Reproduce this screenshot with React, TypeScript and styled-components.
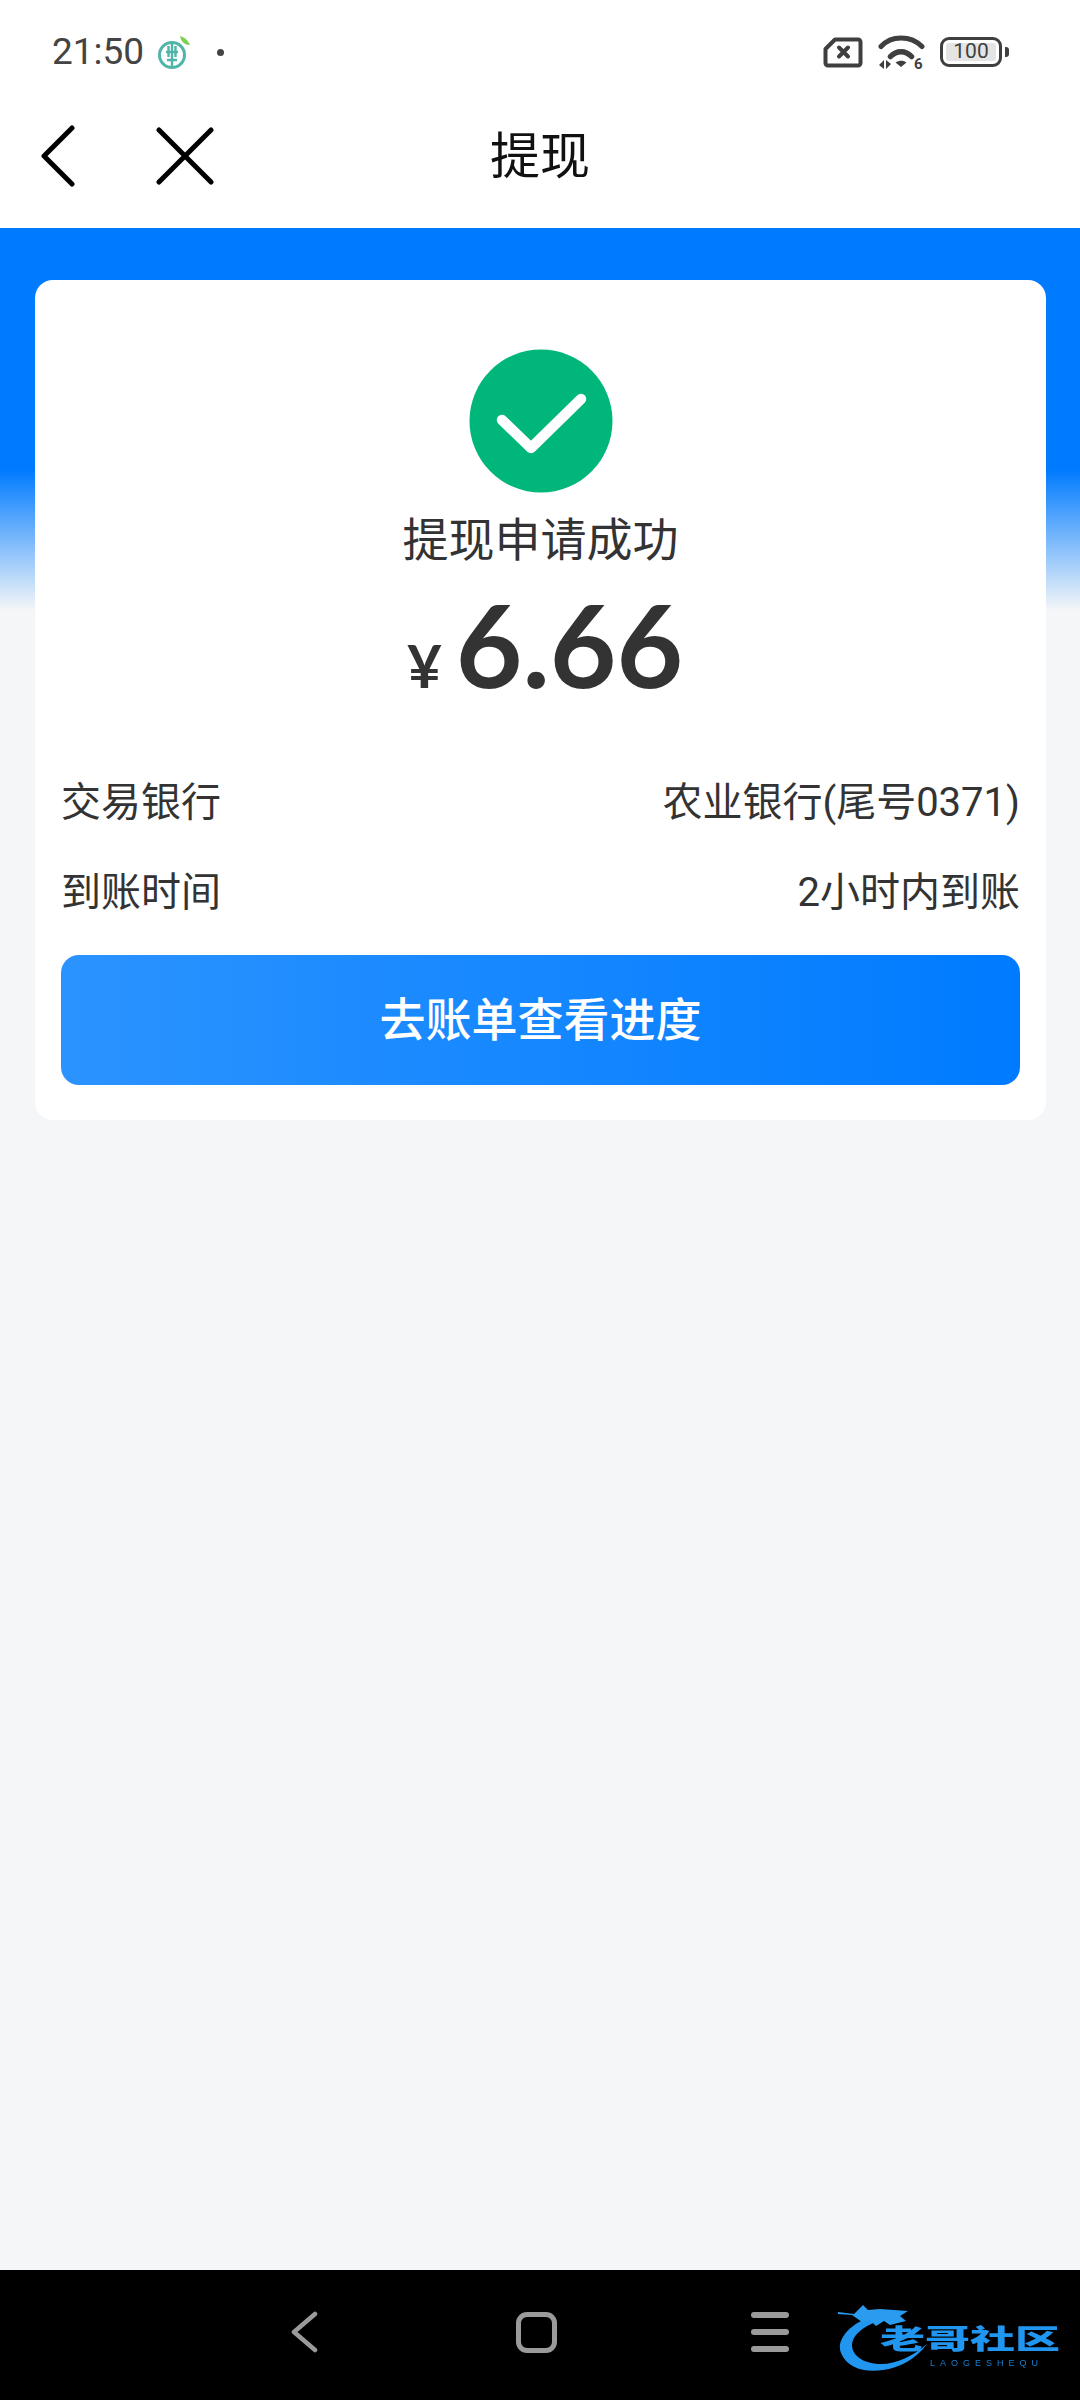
import styled, { createGlobalStyle } from 'styled-components'

const GlobalStyle = createGlobalStyle`
  html, body {
    margin: 0;
    padding: 0;
    background: #f4f6f8;
  }
`

function BankIcon() {
  return (
    <svg width="34" height="36" viewBox="0 0 34 36">
      <circle cx="14" cy="21" r="12.500" fill="none" stroke="#4fb5a8" strokeWidth="3" />
      <path d="M10.500 12v11M17.500 12v11M14 10v24M9 26h10M8 18h12" stroke="#4fb5a8" strokeWidth="2.400" fill="none" />
      <path d="M22 2c4 1 8 4 10 9-5 0-9-3-10-9z" fill="#7ccf52" />
    </svg>
  )
}

function SimIcon() {
  return (
    <svg width="40" height="31" viewBox="0 0 40 31">
      <path d="M12 2.500h23a2.500 2.500 0 0 1 2.500 2.500v21a2.500 2.500 0 0 1-2.500 2.500H5A2.500 2.500 0 0 1 2.500 26V12z" fill="none" stroke="#3f3f3f" strokeWidth="4" strokeLinejoin="round" />
      <path d="M16 10.500l9 9M25 10.500l-9 9" stroke="#3f3f3f" strokeWidth="4" strokeLinecap="round" />
    </svg>
  )
}

function WifiIcon() {
  return (
    <svg width="47" height="52" viewBox="0 0 47 52">
      <g transform="translate(0 8)">
        <path d="M3 12.500C13 1 33 1 44 12.500" fill="none" stroke="#3f3f3f" strokeWidth="5" strokeLinecap="round" />
        <path d="M12.500 22.500c6-6.500 15-6.500 21 0" fill="none" stroke="#3f3f3f" strokeWidth="5.500" strokeLinecap="round" />
        <path d="M17.500 28.500c3.500-2.500 8-2.500 11 0l-5.500 4.500z" fill="#3f3f3f" />
        <path d="M6 26v9l-5-4zM8 26v9l5-5z" fill="#3f3f3f" />
        <SignalDigit x="36" y="35">6</SignalDigit>
      </g>
    </svg>
  )
}

function CheckBadge() {
  return (
    <svg width="144" height="144" viewBox="0 0 144 144">
      <circle cx="72" cy="72" r="71.500" fill="#00b67a" />
      <path d="M33 71l29 28 50-49" fill="none" stroke="#fff" strokeWidth="10.500" strokeLinecap="round" strokeLinejoin="round" />
    </svg>
  )
}

function WatermarkDragon() {
  return (
    <svg width="100" height="70" viewBox="0 0 100 70">
      <path d="M32 14C10 22-2 38 3 50c6 15 24 20 42 17 16-2 32-10 44-26-14 12-30 20-46 20C28 61 14 54 14 42c0-9 10-18 26-24z" fill="#2196f0" />
      <path d="M0 9l16 2 9-9 5 5 12-1 28 2-8 5 6 5-16 4-6-4-8 5-6-6-8 2-10-7-14-1z" fill="#2a9bee" />
    </svg>
  )
}

export default function App() {
  return (
    <>
      <GlobalStyle />
      <Page>
        <TopArea>
          <StatusBar>
            <StatusLeft>
              <Clock>21:50</Clock>
              <BankIcon />
              <NoticeDot />
            </StatusLeft>
            <StatusRight>
              <SimIcon />
              <WifiIcon />
              <Battery>
                <BatteryBody>
                  <BatteryLevel>100</BatteryLevel>
                </BatteryBody>
                <BatteryNub />
              </Battery>
            </StatusRight>
          </StatusBar>
          <TitleBar>
            <TitleActions>
              <svg width="36" height="62" viewBox="0 0 36 62">
                <path d="M32 3L4 31l28 28" fill="none" stroke="#000" strokeWidth="5" strokeLinecap="round" strokeLinejoin="round" />
              </svg>
              <svg width="58" height="58" viewBox="0 0 58 58">
                <path d="M3 3l52 52M55 3L3 55" fill="none" stroke="#000" strokeWidth="5" strokeLinecap="round" />
              </svg>
            </TitleActions>
            <Title>提现</Title>
          </TitleBar>
        </TopArea>

        <Body>
          <Card>
            <CheckBadge />
            <StatusText>提现申请成功</StatusText>
            <Amount>
              <Currency>¥</Currency>
              <Figure>6.66</Figure>
            </Amount>
            <Rows>
              <Row>
                <span>交易银行</span>
                <span>农业银行(尾号0371)</span>
              </Row>
              <Row>
                <span>到账时间</span>
                <span>2小时内到账</span>
              </Row>
            </Rows>
            <PrimaryButton type="button">去账单查看进度</PrimaryButton>
          </Card>
        </Body>

        <NavBar>
          <NavCell>
            <svg width="28" height="42" viewBox="0 0 28 42">
              <path d="M25 3L4 21l21 18" fill="none" stroke="#9a9a9a" strokeWidth="4.500" strokeLinecap="round" strokeLinejoin="round" />
            </svg>
          </NavCell>
          <NavCell>
            <HomeKey />
          </NavCell>
          <NavCell>
            <MenuKey>
              <MenuLine />
              <MenuLine />
              <MenuLine />
            </MenuKey>
          </NavCell>
          <Watermark>
            <WatermarkDragon />
            <WatermarkName>老哥社区</WatermarkName>
            <WatermarkLatin>LAOGESHEQU</WatermarkLatin>
          </Watermark>
        </NavBar>
      </Page>
    </>
  )
}

const SignalDigit = styled.text`
  fill: #3f3f3f;
  font-family: Roboto, sans-serif;
  font-size: 15px;
  font-weight: 700;
`

const Page = styled.div`
  width: 1080px;
  height: 2400px;
  display: flex;
  flex-direction: column;
  overflow: hidden;
  background: #f4f6f8;
  font-family: Roboto, "Noto Sans CJK SC", sans-serif;
`

const TopArea = styled.header`
  height: 228px;
  flex: none;
  background: #fff;
  display: flex;
  flex-direction: column;
`

const StatusBar = styled.div`
  height: 104px;
  display: flex;
  align-items: center;
  justify-content: space-between;
  padding: 0 71px 0 52px;
`

const StatusLeft = styled.div`
  display: flex;
  align-items: center;
  gap: 14px;
`

const Clock = styled.span`
  font-size: 37px;
  line-height: 44px;
  color: #444;
`

const NoticeDot = styled.i`
  width: 7px;
  height: 7px;
  margin-left: 11px;
  border-radius: 50%;
  background: #444;
`

const StatusRight = styled.div`
  display: flex;
  align-items: center;
  gap: 15px;
`

const Battery = styled.div`
  display: flex;
  align-items: center;
  gap: 3px;
`

const BatteryBody = styled.div`
  box-sizing: border-box;
  width: 62px;
  height: 30px;
  padding: 3px;
  border: 3.500px solid #3f3f3f;
  border-radius: 9px;
  display: flex;
`

const BatteryLevel = styled.span`
  flex: 1;
  border-radius: 3px;
  background: #e4e4e4;
  color: #3f3f3f;
  font-size: 21px;
  line-height: 17px;
  text-align: center;
`

const BatteryNub = styled.i`
  width: 4px;
  height: 10px;
  border-radius: 0 3px 3px 0;
  background: #3f3f3f;
`

const TitleBar = styled.div`
  height: 124px;
  position: relative;
  padding-bottom: 28px;
  box-sizing: border-box;
  display: flex;
  align-items: center;
  justify-content: center;
`

const TitleActions = styled.div`
  position: absolute;
  left: 40px;
  top: 21px;
  display: flex;
  align-items: center;
  gap: 80px;
`

const Title = styled.h1`
  margin: 0;
  font-size: 50px;
  font-weight: 400;
  color: #111;
`

const Body = styled.main`
  flex: 1;
  padding: 52px 34px 0 35px;
  background: linear-gradient(#007bff 0, #007bff 242px, #f4f6f8 382px) no-repeat;
  background-size: 100% 382px;
`

const Card = styled.section`
  box-sizing: border-box;
  height: 840px;
  padding: 69px 26px 0;
  border-radius: 18px;
  background: #fff;
  display: flex;
  flex-direction: column;
  align-items: center;
`

const StatusText = styled.p`
  margin: 14px 0 0;
  font-size: 46px;
  line-height: 66px;
  color: #333;
`

const Amount = styled.div`
  margin: 14px 0 0 9px;
  display: flex;
  align-items: baseline;
  gap: 14px;
  color: #333;
  font-family: Lato, sans-serif;
  font-weight: 700;
`

const Currency = styled.span`
  font-size: 60px;
`

const Figure = styled.span`
  font-size: 115px;
  line-height: 112px;
`

const Rows = styled.div`
  align-self: stretch;
  margin-top: 68px;
  display: flex;
  flex-direction: column;
  gap: 30px;
`

const Row = styled.div`
  height: 60px;
  display: flex;
  align-items: center;
  justify-content: space-between;
  font-size: 40px;
  color: #333;
`

const PrimaryButton = styled.button`
  align-self: stretch;
  height: 130px;
  margin-top: 36px;
  padding: 0 0 9px;
  border: 0;
  border-radius: 18px;
  background: linear-gradient(90deg, #2b93ff, #007bff);
  color: #fff;
  font-family: inherit;
  font-size: 46px;
  font-weight: 500;
`

const NavBar = styled.nav`
  position: relative;
  height: 130px;
  flex: none;
  padding-left: 187px;
  background: #000;
  display: flex;
  align-items: flex-start;
`

const NavCell = styled.div`
  width: 233px;
  height: 124px;
  display: flex;
  align-items: center;
  justify-content: center;
`

const HomeKey = styled.i`
  box-sizing: border-box;
  width: 41px;
  height: 41px;
  border: 5px solid #9a9a9a;
  border-radius: 11px;
`

const MenuKey = styled.div`
  width: 38px;
  display: flex;
  flex-direction: column;
  gap: 11px;
`

const MenuLine = styled.i`
  height: 6px;
  border-radius: 3px;
  background: #9a9a9a;
`

const Watermark = styled.div`
  position: absolute;
  left: 838px;
  top: 33px;
  width: 224px;
  height: 70px;
  filter: blur(0.7px);
`

const WatermarkName = styled.span`
  position: absolute;
  left: 42px;
  top: 12px;
  color: #2196f0;
  font-family: "Noto Sans CJK SC", sans-serif;
  font-size: 45px;
  font-weight: 900;
  line-height: 46px;
  white-space: nowrap;
  transform: scaleY(0.6);
`

const WatermarkLatin = styled.span`
  position: absolute;
  left: 92px;
  top: 55px;
  color: #1a7fd0;
  font-family: "Liberation Sans", sans-serif;
  font-size: 9px;
  letter-spacing: 5px;
  line-height: 11px;
  white-space: nowrap;
`
